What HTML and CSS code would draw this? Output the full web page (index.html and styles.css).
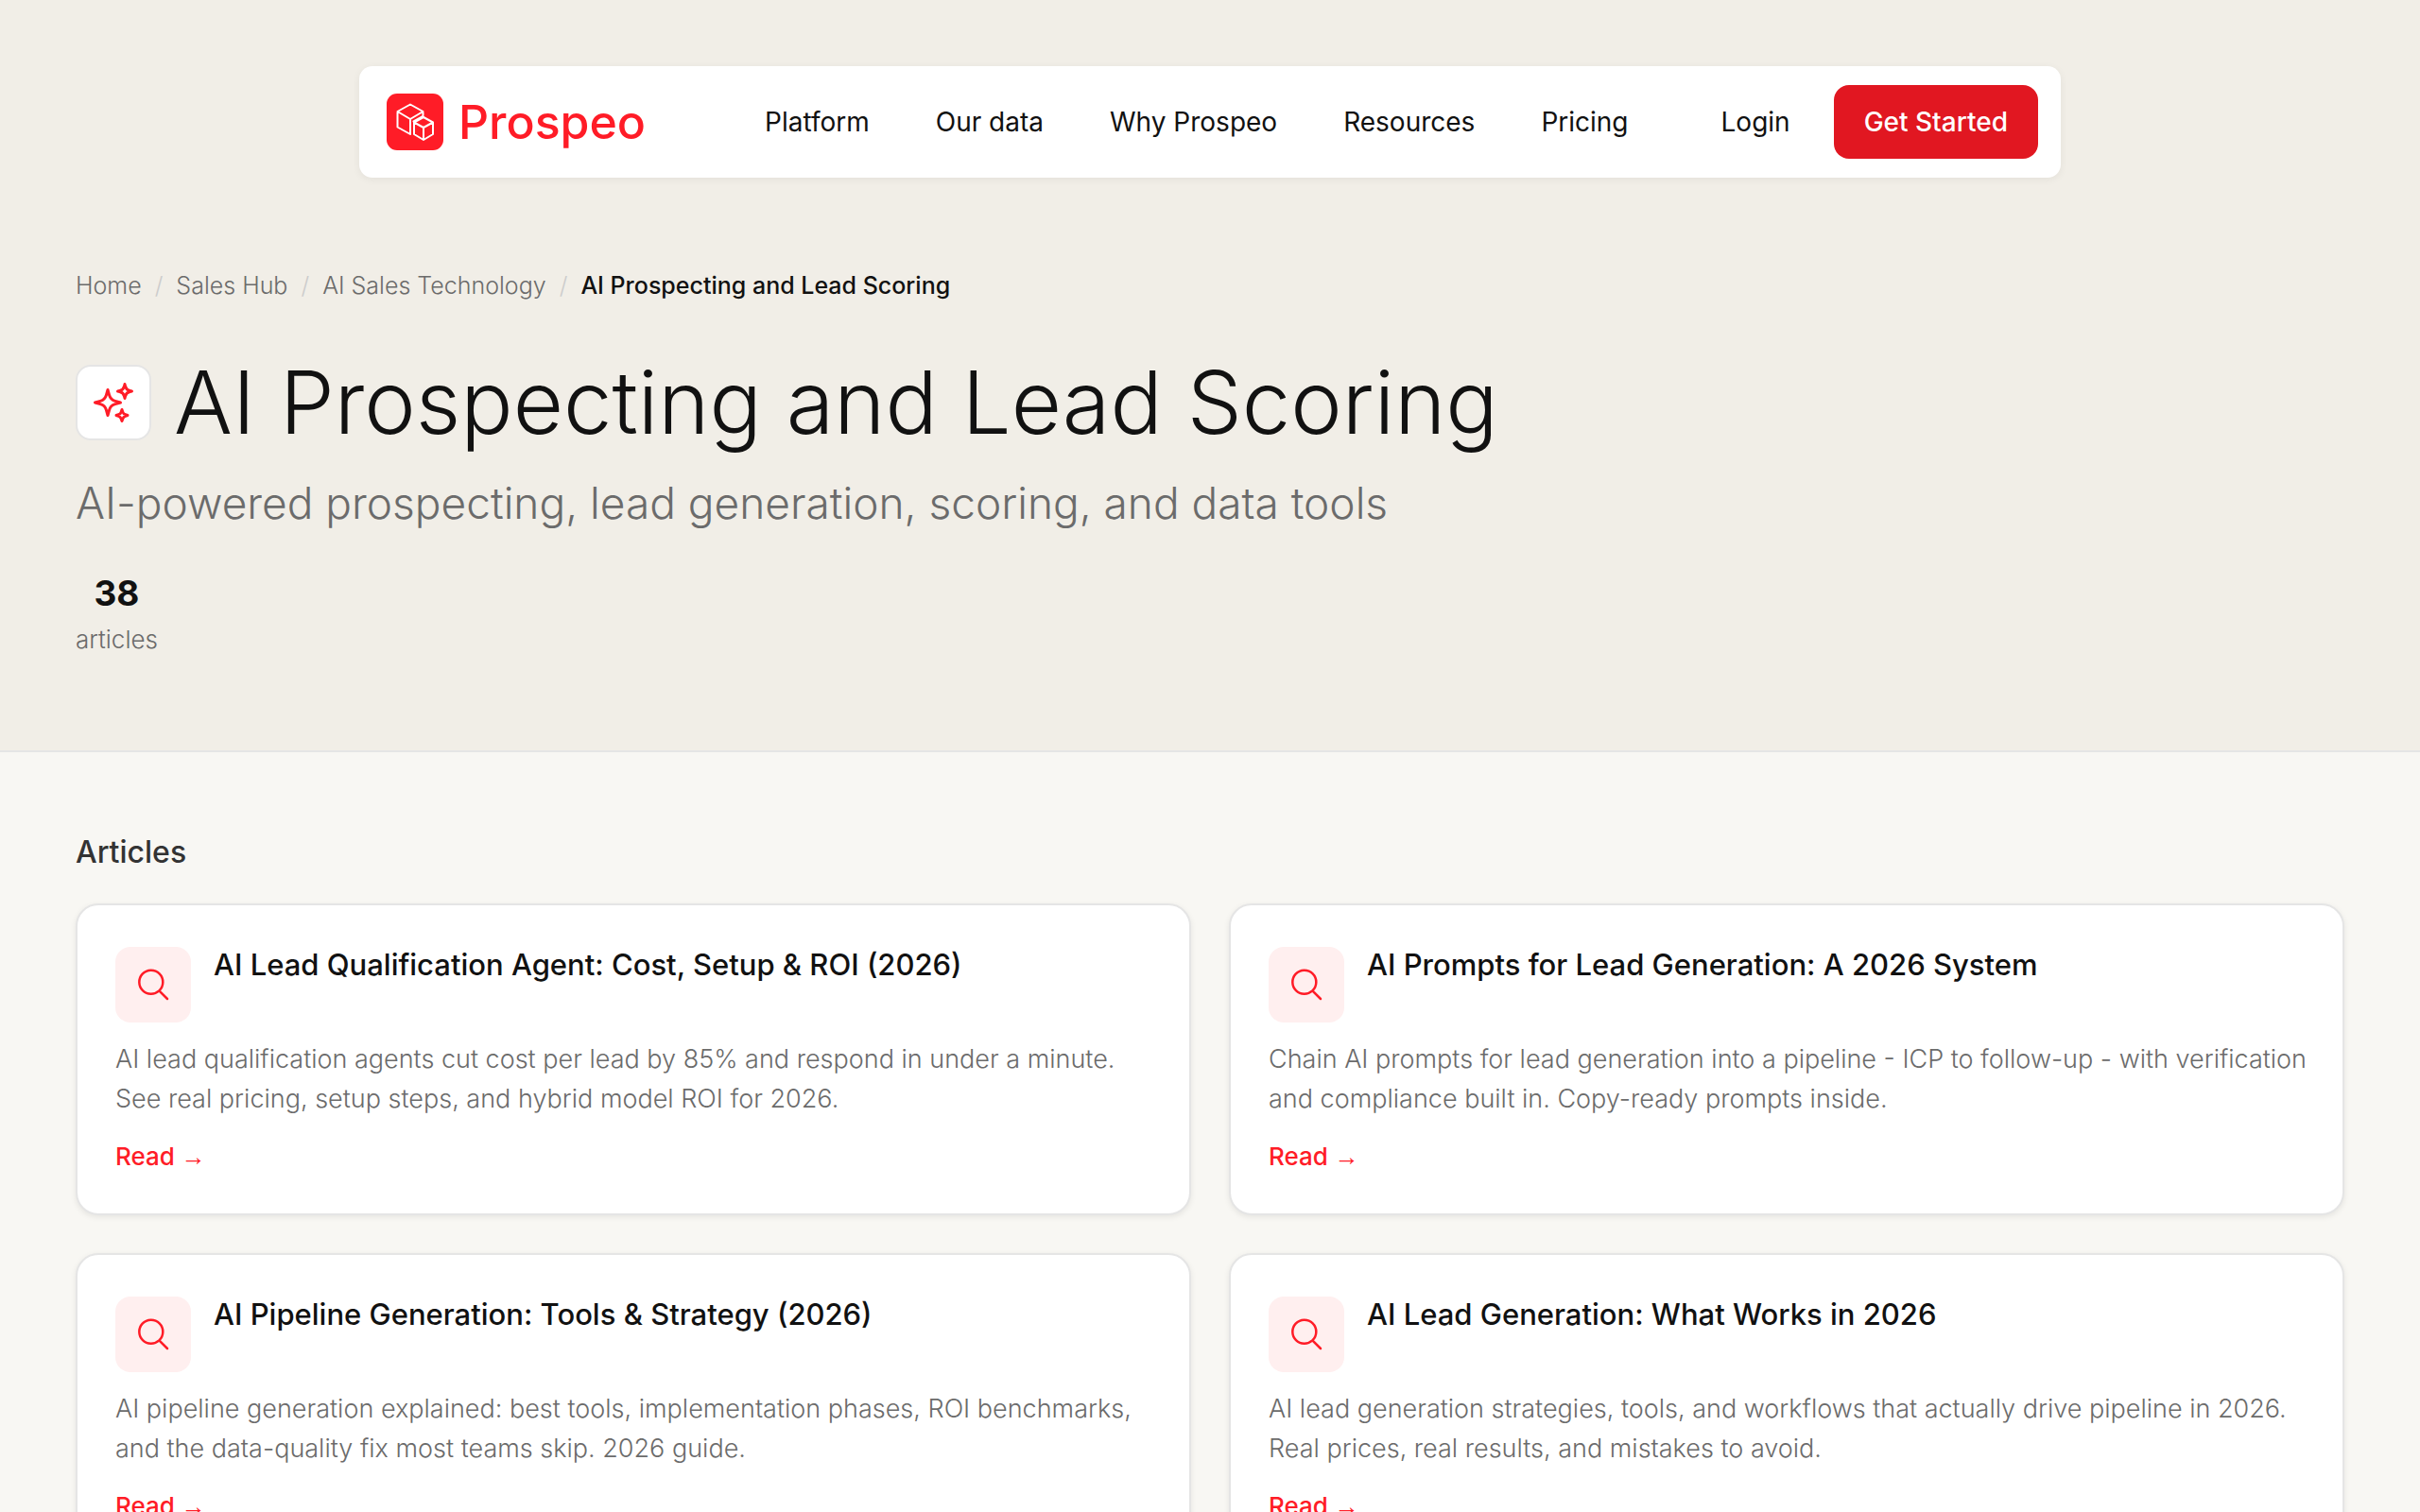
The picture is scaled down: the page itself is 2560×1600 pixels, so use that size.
FILE: index.html
```html
<!DOCTYPE html>
<html lang="en">
<head>
    <meta charset="UTF-8">
    <meta name="viewport" content="width=device-width, initial-scale=1.0">
    <title>AI Prospecting and Lead Scoring | Prospeo</title>
    <link rel="stylesheet" href="styles.css">
</head>
<body>
    <section class="hero">
        <header class="navbar">
            <a class="logo" href="#">
                <svg class="logo-mark" viewBox="0 0 60 60" aria-hidden="true">
                    <rect width="60" height="60" rx="11"/>
                    <path d="M38.5 23V19L25 11.500 11.500 19v16.500L25 43V27L11.500 19M25 27l13.500-8M28.500 29.500L38.500 24"/>
                    <path d="M39 25l10 5.500V43l-10 6-10-6V30.500zM29 30.500L39 36l10-5.500M39 36v13"/>
                </svg>
                <span class="logo-text">Prospeo</span>
            </a>
            <nav class="nav-links">
                <a href="#">Platform</a>
                <a href="#">Our data</a>
                <a href="#">Why Prospeo</a>
                <a href="#">Resources</a>
                <a href="#">Pricing</a>
            </nav>
            <div class="nav-actions">
                <a class="login" href="#">Login</a>
                <button class="btn-start" type="button">Get Started</button>
            </div>
        </header>

        <div class="container">
            <nav class="breadcrumb" aria-label="Breadcrumb">
                <a href="#">Home</a>
                <span class="sep">/</span>
                <a href="#">Sales Hub</a>
                <span class="sep">/</span>
                <a href="#">AI Sales Technology</a>
                <span class="sep">/</span>
                <span class="current">AI Prospecting and Lead Scoring</span>
            </nav>

            <div class="hero-title">
                <div class="hero-icon">
                    <svg viewBox="0 0 24 24" aria-hidden="true">
                        <path d="M9.800 15.900L9 18.750l-.8-2.850a4.500 4.500 0 00-3.100-3.100L2.250 12l2.850-.8a4.500 4.500 0 003.100-3.100L9 5.250l.8 2.850a4.500 4.500 0 003.100 3.100l2.850.8-2.850.8a4.500 4.500 0 00-3.100 3.100zM18.250 8.700L18 9.750l-.25-1.050a3.400 3.400 0 00-2.450-2.450L14.250 6l1.050-.25a3.400 3.400 0 002.450-2.450L18 2.250l.25 1.050a3.400 3.400 0 002.450 2.450L21.750 6l-1.050.25a3.400 3.400 0 00-2.450 2.450zM16.900 20.600l-.4 1.150-.4-1.150a2.250 2.250 0 00-1.400-1.450l-1.200-.4 1.200-.4a2.250 2.250 0 001.400-1.400l.4-1.200.4 1.200a2.250 2.250 0 001.400 1.400l1.200.4-1.200.4a2.250 2.250 0 00-1.400 1.450z"/>
                    </svg>
                </div>
                <h1>AI Prospecting and Lead Scoring</h1>
            </div>
            <p class="hero-desc">AI-powered prospecting, lead generation, scoring, and data tools</p>

            <div class="stats">
                <div class="stat">
                    <span class="stat-value">38</span>
                    <span class="stat-label">articles</span>
                </div>
            </div>
        </div>
    </section>

    <main class="container articles">
        <h2>Articles</h2>
        <div class="card-grid">
            <article class="card">
                <div class="card-head">
                    <div class="card-icon">
                        <svg viewBox="0 0 24 24" aria-hidden="true"><path d="M21 21l-5.200-5.200m0 0A7.500 7.500 0 105.200 5.200a7.500 7.500 0 0010.600 10.600z"/></svg>
                    </div>
                    <h3>AI Lead Qualification Agent: Cost, Setup &amp; ROI (2026)</h3>
                </div>
                <p>AI lead qualification agents cut cost per lead by 85% and respond in under a minute. See real pricing, setup steps, and hybrid model ROI for 2026.</p>
                <a class="read" href="#">Read <span class="arrow">→</span></a>
            </article>

            <article class="card">
                <div class="card-head">
                    <div class="card-icon">
                        <svg viewBox="0 0 24 24" aria-hidden="true"><path d="M21 21l-5.200-5.200m0 0A7.500 7.500 0 105.200 5.200a7.500 7.500 0 0010.600 10.600z"/></svg>
                    </div>
                    <h3>AI Prompts for Lead Generation: A 2026 System</h3>
                </div>
                <p>Chain AI prompts for lead generation into a pipeline - ICP to follow-up - with verification and compliance built in. Copy-ready prompts inside.</p>
                <a class="read" href="#">Read <span class="arrow">→</span></a>
            </article>

            <article class="card">
                <div class="card-head">
                    <div class="card-icon">
                        <svg viewBox="0 0 24 24" aria-hidden="true"><path d="M21 21l-5.200-5.200m0 0A7.500 7.500 0 105.200 5.200a7.500 7.500 0 0010.600 10.600z"/></svg>
                    </div>
                    <h3>AI Pipeline Generation: Tools &amp; Strategy (2026)</h3>
                </div>
                <p>AI pipeline generation explained: best tools, implementation phases, ROI benchmarks, and the data-quality fix most teams skip. 2026 guide.</p>
                <a class="read" href="#">Read <span class="arrow">→</span></a>
            </article>

            <article class="card">
                <div class="card-head">
                    <div class="card-icon">
                        <svg viewBox="0 0 24 24" aria-hidden="true"><path d="M21 21l-5.200-5.200m0 0A7.500 7.500 0 105.200 5.200a7.500 7.500 0 0010.600 10.600z"/></svg>
                    </div>
                    <h3>AI Lead Generation: What Works in 2026</h3>
                </div>
                <p>AI lead generation strategies, tools, and workflows that actually drive pipeline in 2026. Real prices, real results, and mistakes to avoid.</p>
                <a class="read" href="#">Read <span class="arrow">→</span></a>
            </article>
        </div>
    </main>
</body>
</html>
```
FILE: styles.css
```css
* {
    padding: 0;
    margin: 0;
    box-sizing: border-box;
}

body {
    font-family: Inter, 'Liberation Sans', sans-serif;
    background-color: #f8f7f3;
    color: #111;
}

a {
    color: inherit;
    text-decoration: none;
}

svg path {
    fill: none;
    stroke: #ff1c27;
    stroke-width: 1.5;
    stroke-linecap: round;
    stroke-linejoin: round;
}

.hero {
    background-color: #f1eee7;
    border-bottom: 2px solid #e5e5e5;
    padding: 70px 0 96px;
}

.navbar {
    display: flex;
    align-items: center;
    max-width: 1800px;
    margin: 0 auto;
    padding: 20px 24px 20px 29px;
    background-color: #fff;
    border-radius: 14px;
    box-shadow: 0 2px 8px rgba(0, 0, 0, 0.06);
    font-size: 28px;
    line-height: 34px;
}

.logo {
    display: flex;
    align-items: center;
    gap: 16px;
}

.logo-mark {
    width: 60px;
    height: 60px;
}

.logo-mark rect {
    fill: #ff1c27;
}

.logo-mark path {
    stroke: #fff;
    stroke-width: 2;
}

.logo-text {
    color: #ff1c27;
    font-size: 50px;
    font-weight: 500;
    line-height: 60px;
}

.nav-links {
    display: flex;
    gap: 70px;
    margin-left: auto;
}

.nav-actions {
    display: flex;
    align-items: center;
    gap: 46px;
    margin-left: 98px;
}

.btn-start {
    background-color: #e11721;
    color: #fff;
    border: none;
    border-radius: 16px;
    padding: 22px 32px;
    font-family: inherit;
    font-size: 28px;
    font-weight: 500;
    line-height: 34px;
    cursor: pointer;
}

.container {
    padding: 0 80px;
}

.breadcrumb {
    display: flex;
    gap: 14px;
    margin-top: 94px;
    font-size: 25px;
    font-weight: 300;
    line-height: 40px;
    color: #6b6b6b;
}

.sep {
    color: #ccc;
}

.current {
    color: #111;
    font-weight: 500;
}

.hero-title {
    display: flex;
    align-items: center;
    gap: 24px;
    margin-top: 48px;
}

.hero-icon {
    display: flex;
    align-items: center;
    justify-content: center;
    flex-shrink: 0;
    width: 80px;
    height: 80px;
    background-color: #fff;
    border: 2px solid #e5e5e5;
    border-radius: 16px;
}

.hero-icon svg {
    width: 48px;
    height: 48px;
}

h1 {
    font-size: 92px;
    font-weight: 300;
    line-height: 112px;
}

.hero-desc {
    margin-top: 18px;
    color: #6b6b6b;
    font-size: 46px;
    font-weight: 300;
    line-height: 64px;
}

.stats {
    display: flex;
    margin-top: 36px;
}

.stat {
    display: flex;
    flex-direction: column;
    align-items: center;
}

.stat-value {
    font-size: 37px;
    font-weight: 700;
    line-height: 56px;
}

.stat-label {
    color: #6b6b6b;
    font-size: 26px;
    font-weight: 300;
    line-height: 42px;
}

.articles {
    padding-top: 82px;
    padding-bottom: 80px;
}

h2 {
    margin-bottom: 30px;
    color: #333;
    font-size: 32px;
    font-weight: 500;
    line-height: 48px;
}

.card-grid {
    display: grid;
    grid-template-columns: 1fr 1fr;
    gap: 40px;
}

.card {
    padding: 40px 32px 40px 40px;
    background-color: #fff;
    border: 2px solid #e5e5e5;
    border-radius: 24px;
    box-shadow: 0 2px 6px rgba(0, 0, 0, 0.08);
}

.card-head {
    display: flex;
    gap: 24px;
}

.card-icon {
    display: flex;
    align-items: center;
    justify-content: center;
    flex-shrink: 0;
    width: 80px;
    height: 80px;
    margin-top: 4px;
    background-color: #ffefef;
    border-radius: 16px;
}

.card-icon svg {
    width: 40px;
    height: 40px;
}

h3 {
    font-size: 31px;
    font-weight: 500;
    line-height: 46px;
}

.card p {
    margin-top: 18px;
    color: #6b6b6b;
    font-size: 27px;
    font-weight: 300;
    line-height: 42px;
}

.read {
    display: block;
    margin-top: 20px;
    color: #ff1c27;
    font-size: 26px;
    font-weight: 500;
    line-height: 40px;
}

.arrow {
    font-family: 'Liberation Sans', sans-serif;
    font-weight: 400;
    line-height: 1;
}
```
